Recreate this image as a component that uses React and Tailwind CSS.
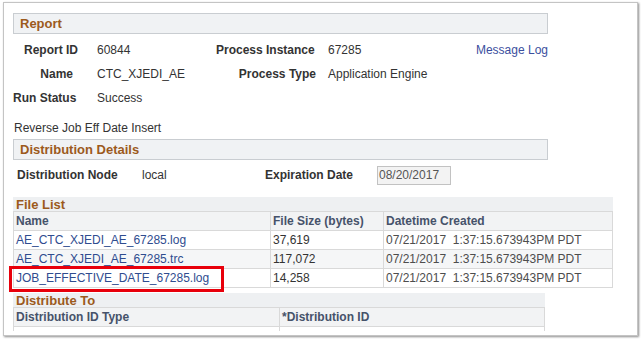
import React from 'react';

const files = [
  { name: 'AE_CTC_XJEDI_AE_67285.log', size: '37,619', created: '07/21/2017  1:37:15.673943PM PDT' },
  { name: 'AE_CTC_XJEDI_AE_67285.trc', size: '117,072', created: '07/21/2017  1:37:15.673943PM PDT' },
  { name: 'JOB_EFFECTIVE_DATE_67285.log', size: '14,258', created: '07/21/2017  1:37:15.673943PM PDT' },
];

const SectionBar = ({ title }) => (
  <div className="w-[535px] h-[21px] bg-[#f0f2f4] border border-[#c9cdd1] flex items-center pl-[6px]">
    <span className="text-[13px] font-bold text-[#9c5a1c]">{title}</span>
  </div>
);

const App = () => {
  return (
    <div className="w-[642px] h-[339px] bg-white overflow-hidden font-['Liberation_Sans',Arial,sans-serif] text-[12px] text-[#333] whitespace-nowrap">
      <div className="ml-[3px] mt-[2px] w-[635px] h-[334px] border border-[#c4c4c4] shadow-[1px_1px_2px_rgba(0,0,0,0.45)] bg-white">
        <div className="h-[328px] overflow-hidden pl-[9px] pt-[10px]">
          {/* Report */}
          <SectionBar title="Report" />
          <div className="mt-[4px] w-[535px]">
            <div className="flex items-center h-[24px]">
              <span className="shrink-0 w-[65px] text-right font-bold">Report ID</span>
              <span className="shrink-0 ml-[19px] w-[119px]">60844</span>
              <span className="shrink-0 w-[97px] text-right font-bold">Process Instance</span>
              <span className="ml-[15px]">67285</span>
              <span className="ml-auto text-[#3b4f9e]">Message Log</span>
            </div>
            <div className="flex items-center h-[24px]">
              <span className="shrink-0 w-[60px] text-right font-bold">Name</span>
              <span className="shrink-0 ml-[24px] w-[119px]">CTC_XJEDI_AE</span>
              <span className="shrink-0 w-[100px] text-right font-bold">Process Type</span>
              <span className="ml-[12px]">Application Engine</span>
            </div>
            <div className="flex items-center h-[24px]">
              <span className="shrink-0 w-[64px] font-bold">Run Status</span>
              <span className="ml-[20px]">Success</span>
            </div>
          </div>

          <div className="mt-[10px] h-[16px] leading-[16px] pl-[1px]">Reverse Job Eff Date Insert</div>

          {/* Distribution Details */}
          <div className="mt-[3px]">
            <SectionBar title="Distribution Details" />
          </div>
          <div className="mt-[3px] h-[24px] flex items-center">
            <span className="shrink-0 ml-[4px] w-[125px] font-bold">Distribution Node</span>
            <span className="shrink-0 w-[123px]">local</span>
            <span className="shrink-0 w-[112px] font-bold">Expiration Date</span>
            <span className="shrink-0 w-[74px] h-[19px] bg-[#f3f3f3] border border-[#c2c2c2] flex items-center pl-[1px] text-[#555]">08/20/2017</span>
          </div>

          {/* File List */}
          <div className="mt-[10px] w-[600px] h-[14px] bg-[#eef0f2] flex items-center pl-[3px]">
            <span className="text-[13px] font-bold text-[#9c5a1c] leading-none pt-[1px]">File List</span>
          </div>
          <div className="relative w-[600px]">
            <table className="w-[600px] border-collapse">
              <thead>
                <tr className="h-[19px] bg-[#f2f3f4] text-[#46526a] font-bold">
                  <td className="w-[257px] border border-[#d9d9d9] pl-[2px] py-0">Name</td>
                  <td className="w-[113px] border border-[#d9d9d9] pl-[2px] py-0">File Size (bytes)</td>
                  <td className="border border-[#d9d9d9] pl-[2px] py-0">Datetime Created</td>
                </tr>
              </thead>
              <tbody>
                {files.map((f, i) => (
                  <tr key={f.name} className={`h-[19px] ${i === 1 ? 'bg-[#f5f6f7]' : 'bg-white'}`}>
                    <td className="border border-[#d9d9d9] pl-[2px] py-0 text-[#2f4c8f]">{f.name}</td>
                    <td className="border border-[#d9d9d9] pl-[2px] py-0">{f.size}</td>
                    <td className="border border-[#d9d9d9] pl-[2px] py-0 text-[#4d4d4d] whitespace-pre">{f.created}</td>
                  </tr>
                ))}
              </tbody>
            </table>
            <div className="absolute left-[-4px] top-[55px] w-[215px] h-[26px] border-[3px] border-[#e8000b]"></div>
          </div>

          {/* Distribute To */}
          <div className="mt-[5px] w-[532px] h-[14px] bg-[#eef0f2] flex items-center pl-[3px]">
            <span className="text-[13px] font-bold text-[#9c5a1c] leading-none pt-[1px]">Distribute To</span>
          </div>
          <table className="w-[532px] border-collapse">
            <thead>
              <tr className="h-[17px] bg-[#f2f3f4] text-[#46526a] font-bold">
                <td className="w-[266px] border border-[#d9d9d9] pl-[2px] py-0">Distribution ID Type</td>
                <td className="border border-[#d9d9d9] pl-[2px] py-0">*Distribution ID</td>
              </tr>
            </thead>
            <tbody>
              <tr className="h-[19px]">
                <td className="border border-[#d9d9d9]"></td>
                <td className="border border-[#d9d9d9]"></td>
              </tr>
            </tbody>
          </table>
        </div>
      </div>
    </div>
  );
};

export default App;
